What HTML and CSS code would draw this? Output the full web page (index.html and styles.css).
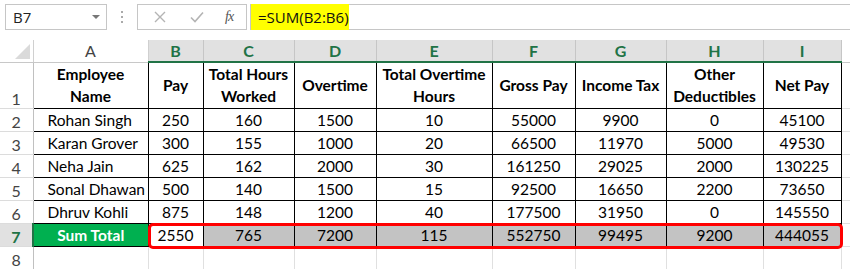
FILE: index.html
```html
<!DOCTYPE html>
<html>
<head>
<meta charset="utf-8">
<link rel="stylesheet" href="styles.css">
</head>
<body>
<div class="toolbar">
  <div class="namebox"><span class="ref">B7</span><span class="caret"></span></div>
  <div class="dots"><i></i><i></i><i></i></div>
  <div class="fbuttons">
    <svg class="ico" width="14" height="14" viewBox="0 0 14 14"><path d="M2 2 L12 12 M12 2 L2 12" stroke="#b4b4b4" stroke-width="1.4" fill="none"/></svg>
    <svg class="ico" width="16" height="14" viewBox="0 0 16 14"><path d="M2 7.5 L6 11.5 L14 2.5" stroke="#b4b4b4" stroke-width="1.6" fill="none"/></svg>
    <span class="fx">fx</span>
  </div>
  <div class="formula"><span class="hl">=SUM(B2:B6)</span></div>
</div>
<div class="sheet">
<table class="grid">
  <colgroup>
    <col class="c-rh"><col class="c-a"><col class="c-b"><col class="c-c"><col class="c-d"><col class="c-e"><col class="c-f"><col class="c-g"><col class="c-h"><col class="c-i"><col class="c-x">
  </colgroup>
  <tr class="hdr">
    <th class="corner"><span class="tri"></span></th>
    <th class="ch">A</th>
    <th class="ch sel">B</th><th class="ch sel">C</th><th class="ch sel">D</th><th class="ch sel">E</th><th class="ch sel">F</th><th class="ch sel">G</th><th class="ch sel">H</th><th class="ch sel">I</th>
    <th class="ch blank"></th>
  </tr>
  <tr class="r1">
    <td class="rh">1</td>
    <td class="d b">Employee<br>Name</td>
    <td class="d b">Pay</td>
    <td class="d b">Total Hours<br>Worked</td>
    <td class="d b">Overtime</td>
    <td class="d b">Total Overtime<br>Hours</td>
    <td class="d b">Gross Pay</td>
    <td class="d b">Income Tax</td>
    <td class="d b">Other<br>Deductibles</td>
    <td class="d b">Net Pay</td>
    <td class="e"></td>
  </tr>
  <tr>
    <td class="rh">2</td><td class="d nm">Rohan Singh</td><td class="d">250</td><td class="d">160</td><td class="d">1500</td><td class="d">10</td><td class="d">55000</td><td class="d">9900</td><td class="d">0</td><td class="d">45100</td><td class="e"></td>
  </tr>
  <tr>
    <td class="rh">3</td><td class="d nm">Karan Grover</td><td class="d">300</td><td class="d">155</td><td class="d">1000</td><td class="d">20</td><td class="d">66500</td><td class="d">11970</td><td class="d">5000</td><td class="d">49530</td><td class="e"></td>
  </tr>
  <tr>
    <td class="rh">4</td><td class="d nm">Neha Jain</td><td class="d">625</td><td class="d">162</td><td class="d">2000</td><td class="d">30</td><td class="d">161250</td><td class="d">29025</td><td class="d">2000</td><td class="d">130225</td><td class="e"></td>
  </tr>
  <tr>
    <td class="rh">5</td><td class="d nm">Sonal Dhawan</td><td class="d">500</td><td class="d">140</td><td class="d">1500</td><td class="d">15</td><td class="d">92500</td><td class="d">16650</td><td class="d">2200</td><td class="d">73650</td><td class="e"></td>
  </tr>
  <tr>
    <td class="rh">6</td><td class="d nm">Dhruv Kohli</td><td class="d">875</td><td class="d">148</td><td class="d">1200</td><td class="d">40</td><td class="d">177500</td><td class="d">31950</td><td class="d">0</td><td class="d">145550</td><td class="e"></td>
  </tr>
  <tr class="tot">
    <td class="rh selr">7</td><td class="d sum">Sum Total</td><td class="d active">2550</td><td class="d g">765</td><td class="d g">7200</td><td class="d g">115</td><td class="d g">552750</td><td class="d g">99495</td><td class="d g">9200</td><td class="d g">444055</td><td class="e"></td>
  </tr>
  <tr>
    <td class="rh">8</td><td class="e"></td><td class="e"></td><td class="e"></td><td class="e"></td><td class="e"></td><td class="e"></td><td class="e"></td><td class="e"></td><td class="e"></td><td class="e"></td>
  </tr>
</table>
<div class="redbox"></div>
</div>
</body>
</html>
```
FILE: styles.css
```css
* { box-sizing: border-box; }
html, body { margin: 0; padding: 0; background: #fff; }
body { width: 850px; height: 269px; overflow: hidden; font-family: "Segoe UI", "Open Sans", "Liberation Sans", sans-serif; }

.toolbar { height: 40px; display: flex; align-items: flex-start; padding-top: 4px; }
.namebox { margin-left: 5px; width: 102px; height: 26px; border: 1px solid #c6c6c6; display: flex; align-items: center; justify-content: space-between; padding: 0 6px 0 7px; }
.ref { font-family: "Open Sans", sans-serif; font-size: 15px; color: #222; }
.caret { width: 0; height: 0; border-left: 4px solid transparent; border-right: 4px solid transparent; border-top: 4px solid #777; }
.dots { width: 30px; height: 26px; display: flex; flex-direction: column; align-items: center; justify-content: center; gap: 3px; }
.dots i { display: block; width: 2px; height: 2px; background: #aaa; }
.fbuttons { width: 110px; height: 26px; border: 1px solid #c6c6c6; display: flex; align-items: center; padding-left: 15px; gap: 0; }
.fbuttons .ico { margin-right: 22px; }
.fbuttons .ico + .ico { margin-right: 20px; }
.fx { font-family: "Liberation Serif", serif; font-style: italic; font-size: 14px; color: #555; letter-spacing: -1px; }
.formula { margin-left: 3px; flex: 1; height: 26px; border-top: 1px solid #c6c6c6; border-bottom: 1px solid #c6c6c6; border-left: 1px solid #c6c6c6; display: flex; }
.hl { background: #ffff00; height: 26px; margin-top: -1px; width: 98px; padding-left: 7px; font-family: "Open Sans", sans-serif; font-size: 15px; line-height: 26px; color: #111; white-space: nowrap; }

.sheet { position: relative; }
.grid { border-collapse: collapse; table-layout: fixed; width: 850px; font-family: Lato, "Liberation Sans", sans-serif; font-size: 15.5px; }
.c-rh { width: 33px; } .c-a { width: 115px; } .c-b { width: 55px; } .c-c { width: 91px; } .c-d { width: 82px; }
.c-e { width: 116px; } .c-f { width: 83px; } .c-g { width: 91px; } .c-h { width: 97px; } .c-i { width: 78px; } .c-x { width: 9px; }

.grid td, .grid th { padding: 0; overflow: hidden; white-space: nowrap; }
.hdr th { height: 22px; font-weight: normal; font-size: 16px; color: #444; border-right: 1px solid #d0d0d0; border-bottom: 1px solid #c8c8c8; background: #fff; }
.hdr th.sel { background: #e1e1e1; color: #217346; font-weight: bold; border-right: 1px solid #c6c6c6; border-bottom: 2px solid #217346; }
.hdr th.blank { border-right: none; }
.corner { position: relative; }
.tri { position: absolute; right: 3px; bottom: 3px; width: 0; height: 0; border-left: 15px solid transparent; border-bottom: 15px solid #dadada; }

.rh { color: #444; font-size: 16px; text-align: center; vertical-align: bottom; border-right: 1px solid #c0c0c0; border-bottom: 1px solid #dcdcdc; }
.rh.selr { background: #e1e1e1; color: #217346; font-weight: bold; border-right: 2px solid #217346; }
.r1 td { height: 46px; }
.grid tr:not(.hdr):not(.r1) td { height: 23px; }

.d { border: 1px solid #000; text-align: center; vertical-align: middle; color: #000; }
.d.b { font-weight: bold; line-height: 22px; }
.d.nm { text-align: left; padding-left: 14px; }
.d.sum { background: #00b050; color: #fff; font-weight: bold; }
.d.g { background: #c3c3c3; }
.e { border-right: 1px solid #e0e0e0; border-bottom: 1px solid #e0e0e0; }

.redbox { position: absolute; left: 148px; top: 183px; width: 695px; height: 26px; border: 3px solid #ff0000; border-radius: 5px; pointer-events: none; }
```
